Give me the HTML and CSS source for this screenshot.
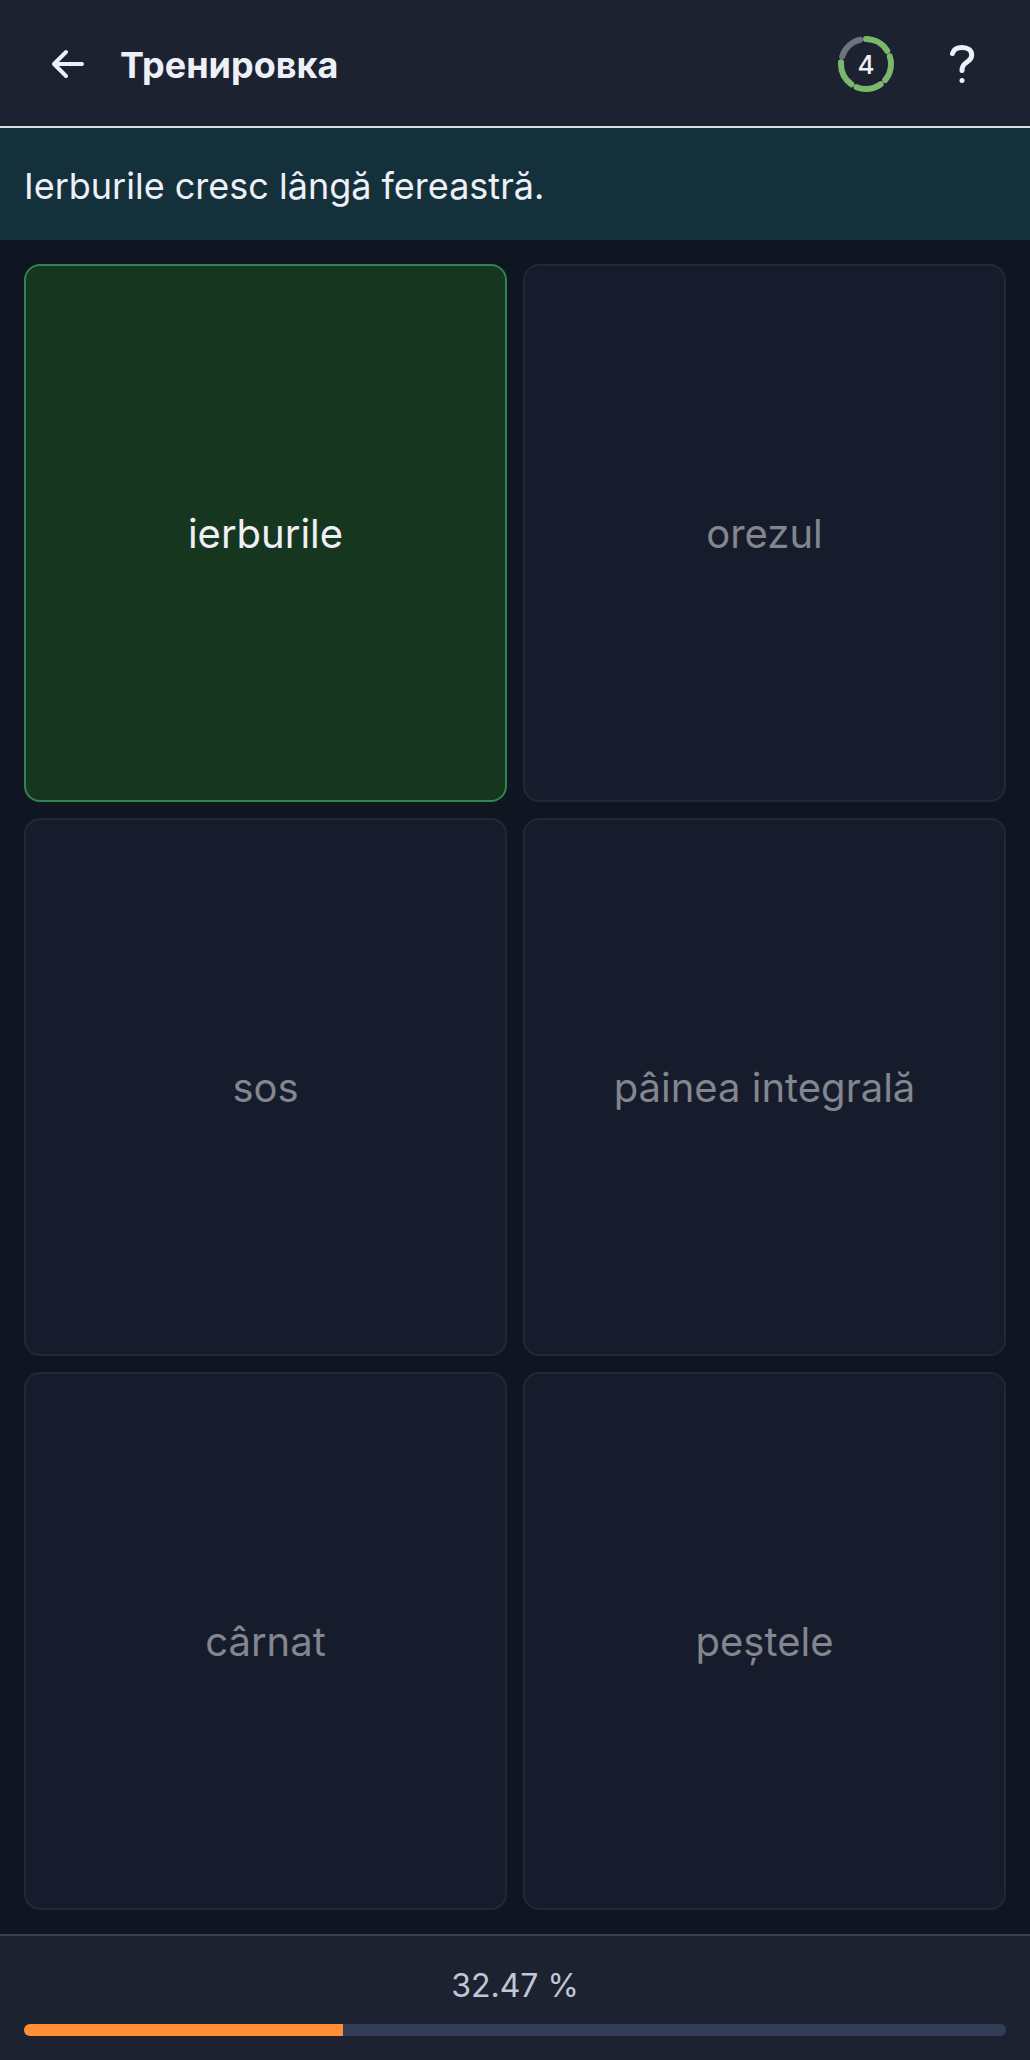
FILE: index.html
```html
<!DOCTYPE html>
<html lang="ru">
<head>
  <meta charset="UTF-8">
  <title>Тренировка</title>
  <meta name="viewport" content="width=device-width, initial-scale=1.0">
  <link rel="stylesheet" href="styles.css">
</head>
<body>

  <!-- Top bar -->
  <header class="header">
    <button class="icon-btn back" type="button" aria-label="Назад">
      <svg width="40" height="40" viewBox="0 0 40 40">
        <path d="M34 20H6M18 8L6 20l12 12"/>
      </svg>
    </button>
    <h1 class="title">Тренировка</h1>
    <div class="level">
      <svg width="56" height="56" viewBox="0 0 56 56">
        <g transform="rotate(-90 28 28)">
          <circle class="ring-off" cx="28" cy="28" r="25" pathLength="360" stroke-dasharray="58 302" stroke-dashoffset="-288"/>
          <circle class="ring-on" cx="28" cy="28" r="25" pathLength="360" stroke-dasharray="58 14 58 14 58 14 58 86"/>
        </g>
      </svg>
      <span class="level-value">4</span>
    </div>
    <button class="icon-btn help" type="button" aria-label="Помощь">
      <svg width="40" height="40" viewBox="0 0 40 40">
        <path d="M10.500 9.500C11.500 5.500 15 3.500 20 3.500C26 3.500 29.700 6.500 29.700 11C29.700 14.500 27.500 16.500 24.500 18.500C21.500 20.500 20 22 20 26.500"/>
        <circle class="dot" cx="20" cy="36.500" r="2.500"/>
      </svg>
    </button>
  </header>

  <!-- Sentence -->
  <p class="sentence" lang="ro">Ierburile cresc lângă fereastră.</p>

  <!-- Answers -->
  <main class="answers" lang="ro">
    <button class="answer correct" type="button">ierburile</button>
    <button class="answer" type="button" disabled>orezul</button>
    <button class="answer" type="button" disabled>sos</button>
    <button class="answer" type="button" disabled>pâinea integrală</button>
    <button class="answer" type="button" disabled>cârnat</button>
    <button class="answer" type="button" disabled>peștele</button>
  </main>

  <!-- Progress -->
  <footer class="footer">
    <div class="percent" id="percent">32.47 %</div>
    <div class="progress" role="progressbar" aria-labelledby="percent" aria-valuenow="32.47" aria-valuemin="0" aria-valuemax="100">
      <div class="progress-fill" style="width: 32.47%"></div>
    </div>
  </footer>

</body>
</html>
```
FILE: styles.css
```css
* {
  margin: 0;
  padding: 0;
  box-sizing: border-box;
}

body {
  display: flex;
  flex-direction: column;
  min-height: 100vh;
  background-color: #0f1521;
  color: #eef0f8;
  font-family: Inter, sans-serif;
}

button {
  font: inherit;
  color: inherit;
  background: none;
  border: none;
  cursor: pointer;
}

/* Top bar */
.header {
  display: flex;
  align-items: center;
  gap: 12px;
  padding: 24px 28px 22px;
  background-color: #1d2231;
  border-bottom: 2px solid #dcdfe0;
}

.icon-btn {
  display: flex;
  align-items: center;
  justify-content: center;
  width: 80px;
  height: 80px;
}

.icon-btn svg,
.level svg {
  fill: none;
  stroke: #eef0f8;
  stroke-width: 4;
  stroke-linecap: round;
  stroke-linejoin: round;
}

.help path {
  stroke-width: 5;
}

.help .dot {
  fill: #eef0f8;
  stroke: none;
}

.title {
  flex: 1;
  padding-top: 2px;
  font-size: 36px;
  line-height: 48px;
  font-weight: 700;
}

/* Ring with the current level */
.level {
  display: grid;
  place-items: center;
  margin-right: 16px;
}

.level > * {
  grid-area: 1 / 1;
}

.level .ring-on {
  stroke: #7ab86b;
  stroke-width: 6;
}

.level .ring-off {
  stroke: #6f737f;
  stroke-width: 6;
}

.level-value {
  padding-top: 2px;
  font-size: 26px;
  line-height: 32px;
  font-weight: 500;
}

/* Sentence */
.sentence {
  padding: 34px 24px 30px;
  background-color: #14303a;
  font-size: 36px;
  line-height: 48px;
}

/* Answers */
.answers {
  flex: 1;
  display: grid;
  grid-template-columns: 1fr 1fr;
  grid-auto-rows: 1fr;
  gap: 16px;
  padding: 24px;
}

.answer {
  padding: 18px 16px 16px;
  background-color: #161c2b;
  border: 2px solid #222836;
  border-radius: 16px;
  color: #83868f;
  font-size: 40px;
  line-height: 48px;
}

.answer.correct {
  background-color: #16361f;
  border-color: #318450;
  color: #eef0f8;
}

/* Progress */
.footer {
  padding: 26px 24px 24px;
  background-color: #1d2231;
  border-top: 2px solid #3b4152;
}

.percent {
  margin-bottom: 14px;
  color: #c2c7d8;
  font-size: 32px;
  line-height: 48px;
  text-align: center;
}

.progress {
  height: 12px;
  border-radius: 6px;
  background-color: #343d57;
  overflow: hidden;
}

.progress-fill {
  height: 100%;
  background-color: #ff8e35;
}
```
